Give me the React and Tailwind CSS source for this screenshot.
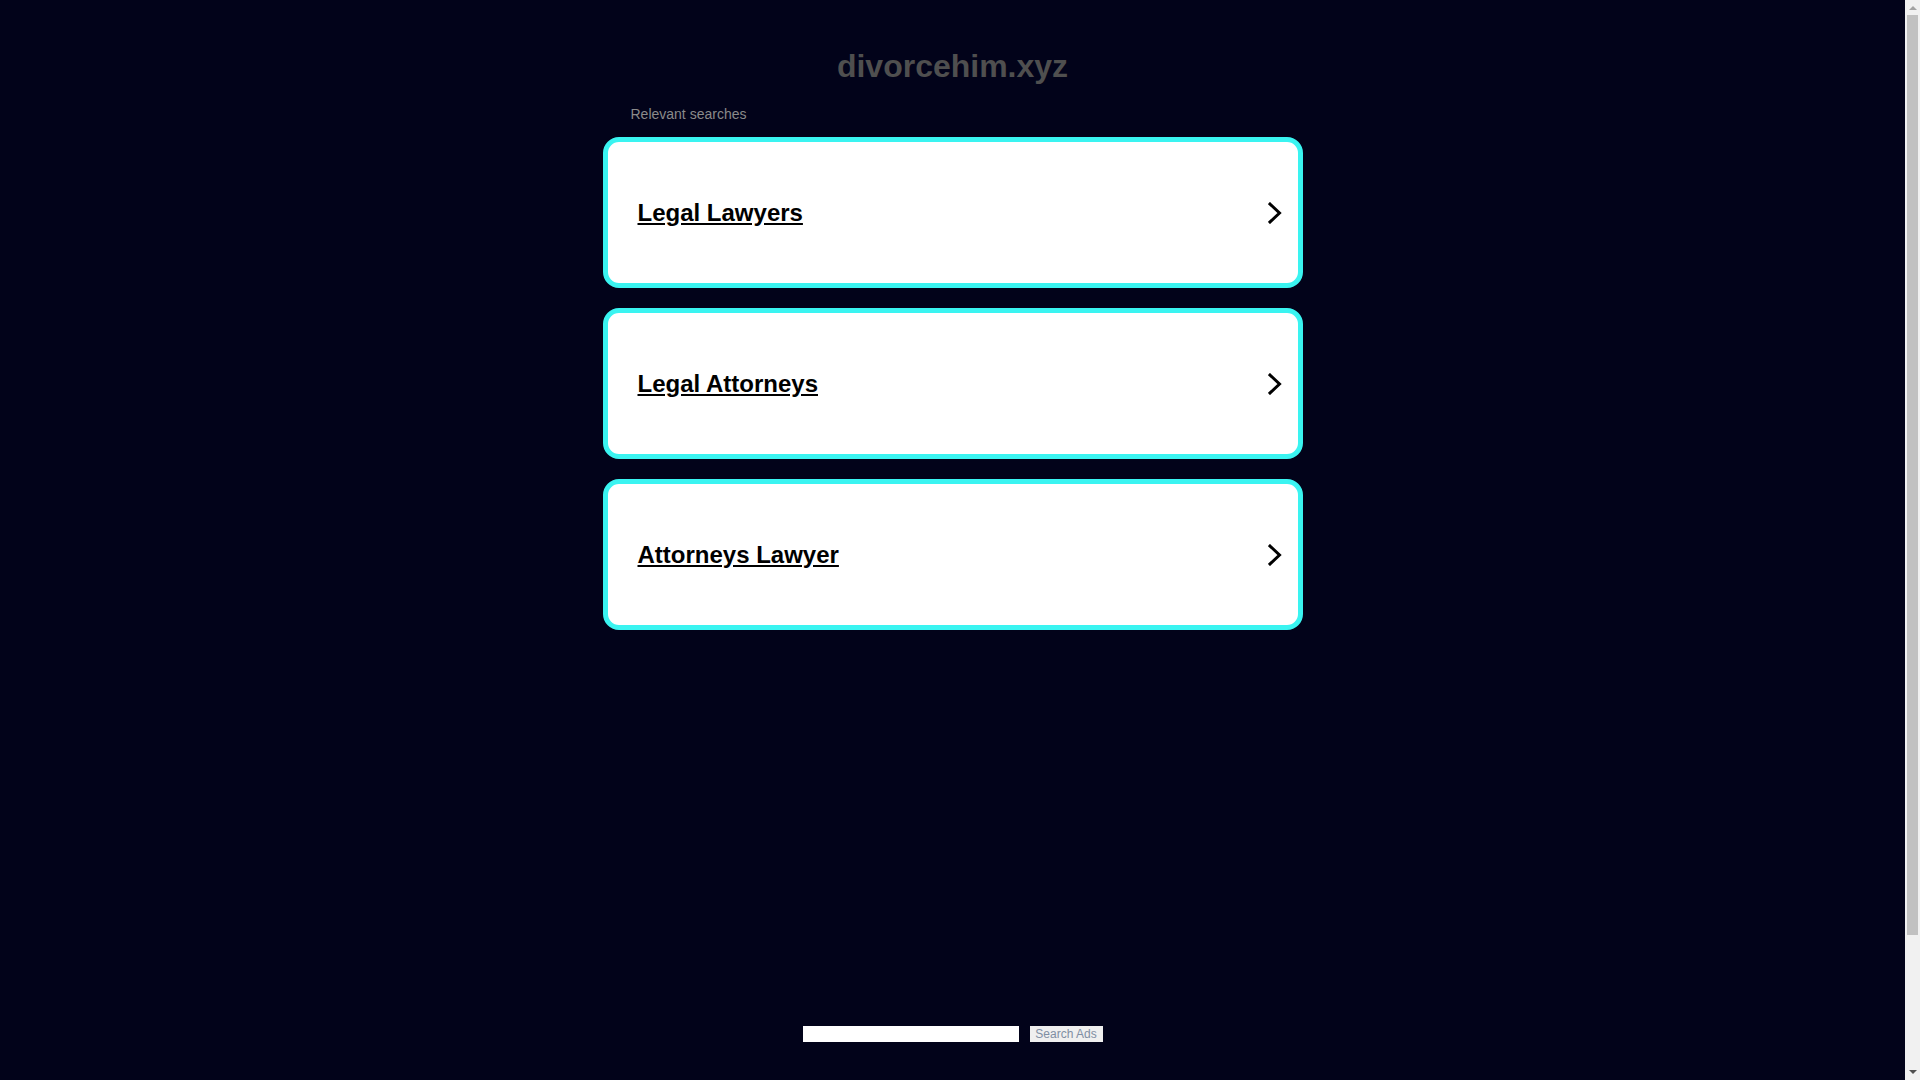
import React from 'react'

const searches = ['Legal Lawyers', 'Legal Attorneys', 'Attorneys Lawyer']

function Chevron() {
  return (
    <svg width="14" height="22" viewBox="0 0 14 22" fill="none">
      <polyline
        points="2,2 11.5,11 2,20"
        stroke="#000"
        strokeWidth="3"
        strokeLinecap="square"
        strokeLinejoin="miter"
      />
    </svg>
  )
}

// the page scrolls in the reference, so the window shows a classic scrollbar
function ScrollBar() {
  return (
    <div className="flex h-full w-[15px] shrink-0 flex-col bg-[#f1f1f1]">
      <div className="flex h-[15px] items-center justify-center">
        <svg width="8" height="5" viewBox="0 0 8 5">
          <polygon points="0,5 4,1 8,5" fill="#a3a3a3" />
        </svg>
      </div>
      <div className="mx-[2px] h-[920px] bg-[#c1c1c1]" />
      <div className="flex-1" />
      <div className="flex h-[15px] items-center justify-center">
        <svg width="8" height="5" viewBox="0 0 8 5">
          <polygon points="0,0 8,0 4,4" fill="#505050" />
        </svg>
      </div>
    </div>
  )
}

export default function App() {
  return (
    <div className="flex h-screen overflow-hidden bg-[#02031a] font-['Liberation_Sans',Arial,sans-serif]">
      <div className="flex-1">
        <div className="mx-auto w-[700px] pt-[46px]">
          <h1 className="text-center text-[32px] font-bold leading-[40px] text-[#4f4f4f]">
            divorcehim.xyz
          </h1>
          <div className="mt-[20px] pl-[28px] text-[14px] leading-4 text-[#8a8a8a]">
            Relevant searches
          </div>
          <div className="mt-[15px] flex flex-col gap-[20px]">
            {searches.map((s) => (
              <a
                key={s}
                href="#"
                className="flex h-[151px] items-center justify-between rounded-[16px] border-[5px] border-[#3af4f1] bg-white pl-[30px] pr-[16px]"
              >
                <span className="text-[24px] font-bold leading-7 text-black underline">{s}</span>
                <Chevron />
              </a>
            ))}
          </div>
        </div>
        <div className="mt-[396px] flex items-center justify-center gap-[11px]">
          <input type="text" className="h-[16px] w-[216px] border-0 bg-white outline-none" />
          <button className="h-[16px] w-[73px] bg-[#efefef] text-[12px] leading-4 text-[#7f8ea3]">
            Search Ads
          </button>
        </div>
      </div>
      <ScrollBar />
    </div>
  )
}
